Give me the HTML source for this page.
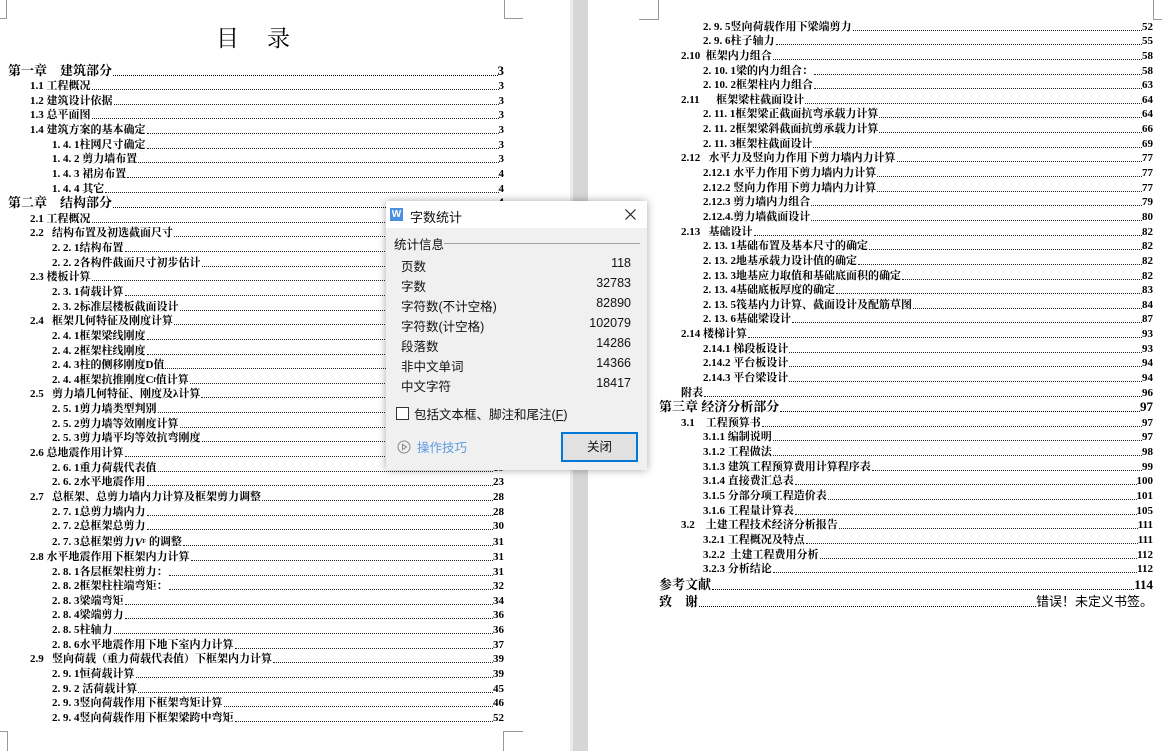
<!DOCTYPE html>
<html><head><meta charset="utf-8"><style>
*{margin:0;padding:0;box-sizing:border-box}
body{width:1162px;height:751px;overflow:hidden;background:#fff;position:relative;font-family:"Liberation Serif","Noto Serif CJK SC",serif;color:#000}
.gap{position:absolute;left:573px;top:0;width:15px;height:751px;background:#d6d6d6}
.gap2{position:absolute;left:570px;top:0;width:3px;height:751px;background:#ececec}
.cm{position:absolute;border-color:#999;border-style:solid;border-width:0}
.page{position:absolute}
.r{display:flex;align-items:flex-end;height:14.65px;font-size:11px;font-weight:bold;line-height:12px;white-space:nowrap}
.r .d{flex:1;border-bottom:1.2px dotted #222;margin:0 0 2px 1px;min-width:4px}
.c{font-size:13px;height:15.5px;line-height:14px}
.c .d{border-bottom:1.6px dotted #000}
.l2{padding-left:22px}.l3{padding-left:44px}
.t{position:absolute;left:216px;top:20px;font-size:23px;letter-spacing:28px;font-family:"Liberation Serif","Noto Serif CJK SC",serif}
.dlg{position:absolute;left:386px;top:201px;width:261px;height:269px;background:#f0f0f0;box-shadow:0 0 8px rgba(0,0,0,.35);font-family:"Liberation Sans","Noto Sans CJK SC",sans-serif;font-size:12px;color:#111}
.tb{height:27px;background:#fff;position:relative}
.row{position:absolute;left:15px;width:230px;display:flex;justify-content:space-between;font-size:12.5px}
</style></head><body>
<div class="gap2"></div><div class="gap"></div>
<div class="cm" style="left:0;top:0;width:7px;height:19px;border-right-width:1px;border-bottom-width:1px"></div>
<div class="cm" style="left:504px;top:0;width:19px;height:19px;border-left-width:1px;border-bottom-width:1px"></div>
<div class="cm" style="left:0;top:731px;width:8px;height:20px;border-right-width:1px;border-top-width:1px"></div>
<div class="cm" style="left:503px;top:731px;width:20px;height:20px;border-left-width:1px;border-top-width:1px"></div>
<div class="cm" style="left:639px;top:0;width:20px;height:20px;border-right-width:1px;border-bottom-width:1px"></div>
<div class="cm" style="left:1153px;top:0;width:9px;height:20px;border-left-width:1px;border-bottom-width:1px"></div>
<div class="t">目录</div>

<div class="page" style="left:8px;top:62px;width:496px">
<div class="r c">第一章&nbsp;&nbsp;&nbsp;&nbsp;建筑部分<span class="d"></span>3</div>
<div class="r l2">1.1 工程概况<span class="d"></span>3</div>
<div class="r l2">1.2 建筑设计依据<span class="d"></span>3</div>
<div class="r l2">1.3 总平面图<span class="d"></span>3</div>
<div class="r l2">1.4 建筑方案的基本确定<span class="d"></span>3</div>
<div class="r l3">1. 4. 1柱网尺寸确定<span class="d"></span>3</div>
<div class="r l3">1. 4. 2 剪力墙布置<span class="d"></span>3</div>
<div class="r l3">1. 4. 3 裙房布置<span class="d"></span>4</div>
<div class="r l3">1. 4. 4 其它<span class="d"></span>4</div>
<div class="r c">第二章&nbsp;&nbsp;&nbsp;&nbsp;结构部分<span class="d"></span>4</div>
<div class="r l2">2.1 工程概况<span class="d"></span>4</div>
<div class="r l2">2.2&nbsp;&nbsp;&nbsp;结构布置及初选截面尺寸<span class="d"></span>4</div>
<div class="r l3">2. 2. 1结构布置<span class="d"></span>4</div>
<div class="r l3">2. 2. 2各构件截面尺寸初步估计<span class="d"></span>5</div>
<div class="r l2">2.3 楼板计算<span class="d"></span>6</div>
<div class="r l3">2. 3. 1荷载计算<span class="d"></span>6</div>
<div class="r l3">2. 3. 2标准层楼板截面设计<span class="d"></span>6</div>
<div class="r l2">2.4&nbsp;&nbsp;&nbsp;框架几何特征及刚度计算<span class="d"></span>9</div>
<div class="r l3">2. 4. 1框架梁线刚度<span class="d"></span>9</div>
<div class="r l3">2. 4. 2框架柱线刚度<span class="d"></span>10</div>
<div class="r l3">2. 4. 3柱的侧移刚度D值<span class="d"></span>11</div>
<div class="r l3">2. 4. 4框架抗推刚度C<sub style="font-size:7px">f</sub>值计算<span class="d"></span>12</div>
<div class="r l2">2.5&nbsp;&nbsp;&nbsp;剪力墙几何特征、刚度及λ计算<span class="d"></span>13</div>
<div class="r l3">2. 5. 1剪力墙类型判别<span class="d"></span>13</div>
<div class="r l3">2. 5. 2剪力墙等效刚度计算<span class="d"></span>14</div>
<div class="r l3">2. 5. 3剪力墙平均等效抗弯刚度<span class="d"></span>17</div>
<div class="r l2">2.6 总地震作用计算<span class="d"></span>19</div>
<div class="r l3">2. 6. 1重力荷载代表值<span class="d"></span>19</div>
<div class="r l3">2. 6. 2水平地震作用<span class="d"></span>23</div>
<div class="r l2">2.7&nbsp;&nbsp;&nbsp;总框架、总剪力墙内力计算及框架剪力调整<span class="d"></span>28</div>
<div class="r l3">2. 7. 1总剪力墙内力<span class="d"></span>28</div>
<div class="r l3">2. 7. 2总框架总剪力<span class="d"></span>30</div>
<div class="r l3" style="height:16px">2. 7. 3总框架剪力<i style="font-size:12px">V</i><sub style="font-size:6px">F</sub>&nbsp;的调整<span class="d"></span>31</div>
<div class="r l2">2.8 水平地震作用下框架内力计算<span class="d"></span>31</div>
<div class="r l3">2. 8. 1各层框架柱剪力：<span class="d"></span>31</div>
<div class="r l3">2. 8. 2框架柱柱端弯矩：<span class="d"></span>32</div>
<div class="r l3">2. 8. 3梁端弯矩<span class="d"></span>34</div>
<div class="r l3">2. 8. 4梁端剪力<span class="d"></span>36</div>
<div class="r l3">2. 8. 5柱轴力<span class="d"></span>36</div>
<div class="r l3">2. 8. 6水平地震作用下地下室内力计算<span class="d"></span>37</div>
<div class="r l2">2.9&nbsp;&nbsp;&nbsp;竖向荷载（重力荷载代表值）下框架内力计算<span class="d"></span>39</div>
<div class="r l3">2. 9. 1恒荷载计算<span class="d"></span>39</div>
<div class="r l3">2. 9. 2 活荷载计算<span class="d"></span>45</div>
<div class="r l3">2. 9. 3竖向荷载作用下框架弯矩计算<span class="d"></span>46</div>
<div class="r l3">2. 9. 4竖向荷载作用下框架梁跨中弯矩<span class="d"></span>52</div>
</div>

<div class="page" style="left:659px;top:18px;width:494px">
<div class="r l3">2. 9. 5竖向荷载作用下梁端剪力<span class="d"></span>52</div>
<div class="r l3">2. 9. 6柱子轴力<span class="d"></span>55</div>
<div class="r l2">2.10&nbsp;&nbsp;框架内力组合<span class="d"></span>58</div>
<div class="r l3">2. 10. 1梁的内力组合：<span class="d"></span>58</div>
<div class="r l3">2. 10. 2框架柱内力组合<span class="d"></span>63</div>
<div class="r l2">2.11&nbsp;&nbsp;&nbsp;&nbsp;&nbsp;&nbsp;框架梁柱截面设计<span class="d"></span>64</div>
<div class="r l3">2. 11. 1框架梁正截面抗弯承载力计算<span class="d"></span>64</div>
<div class="r l3">2. 11. 2框架梁斜截面抗剪承载力计算<span class="d"></span>66</div>
<div class="r l3">2. 11. 3框架柱截面设计<span class="d"></span>69</div>
<div class="r l2">2.12&nbsp;&nbsp;&nbsp;水平力及竖向力作用下剪力墙内力计算<span class="d"></span>77</div>
<div class="r l3">2.12.1 水平力作用下剪力墙内力计算<span class="d"></span>77</div>
<div class="r l3">2.12.2 竖向力作用下剪力墙内力计算<span class="d"></span>77</div>
<div class="r l3">2.12.3 剪力墙内力组合<span class="d"></span>79</div>
<div class="r l3">2.12.4.剪力墙截面设计<span class="d"></span>80</div>
<div class="r l2">2.13&nbsp;&nbsp;&nbsp;基础设计<span class="d"></span>82</div>
<div class="r l3">2. 13. 1基础布置及基本尺寸的确定<span class="d"></span>82</div>
<div class="r l3">2. 13. 2地基承载力设计值的确定<span class="d"></span>82</div>
<div class="r l3">2. 13. 3地基应力取值和基础底面积的确定<span class="d"></span>82</div>
<div class="r l3">2. 13. 4基础底板厚度的确定<span class="d"></span>83</div>
<div class="r l3">2. 13. 5筏基内力计算、截面设计及配筋草图<span class="d"></span>84</div>
<div class="r l3">2. 13. 6基础梁设计<span class="d"></span>87</div>
<div class="r l2">2.14 楼梯计算<span class="d"></span>93</div>
<div class="r l3">2.14.1 梯段板设计<span class="d"></span>93</div>
<div class="r l3">2.14.2 平台板设计<span class="d"></span>94</div>
<div class="r l3">2.14.3 平台梁设计<span class="d"></span>94</div>
<div class="r l2">附表<span class="d"></span>96</div>
<div class="r c">第三章 经济分析部分<span class="d"></span>97</div>
<div class="r l2">3.1&nbsp;&nbsp;&nbsp;&nbsp;工程预算书<span class="d"></span>97</div>
<div class="r l3">3.1.1 编制说明<span class="d"></span>97</div>
<div class="r l3">3.1.2 工程做法<span class="d"></span>98</div>
<div class="r l3">3.1.3 建筑工程预算费用计算程序表<span class="d"></span>99</div>
<div class="r l3">3.1.4 直接费汇总表<span class="d"></span>100</div>
<div class="r l3">3.1.5 分部分项工程造价表<span class="d"></span>101</div>
<div class="r l3">3.1.6 工程量计算表<span class="d"></span>105</div>
<div class="r l2">3.2&nbsp;&nbsp;&nbsp;&nbsp;土建工程技术经济分析报告<span class="d"></span>111</div>
<div class="r l3">3.2.1 工程概况及特点<span class="d"></span>111</div>
<div class="r l3">3.2.2&nbsp;&nbsp;土建工程费用分析<span class="d"></span>112</div>
<div class="r l3">3.2.3 分析结论<span class="d"></span>112</div>
<div class="r c" style="height:17px">参考文献<span class="d"></span>114</div>
<div class="r c" style="height:17px">致&nbsp;&nbsp;&nbsp;&nbsp;谢<span class="d"></span><span style="font-weight:normal;font-family:'Liberation Sans','Noto Sans CJK SC',sans-serif">错误！未定义书签。</span></div>
</div>

<div class="dlg">
<div class="tb">
<div style="position:absolute;left:4px;top:7px;width:13px;height:13px;background:#4a8fe0;color:#fff;font-size:10px;line-height:13px;text-align:center;font-weight:bold">W</div>
<div style="position:absolute;left:24px;top:6px;font-size:13px">字数统计</div>
<svg style="position:absolute;left:239px;top:8px" width="11" height="11"><path d="M0.5 0.5L10.5 10.5M10.5 0.5L0.5 10.5" stroke="#222" stroke-width="1.2"/></svg>
</div>
<div style="position:absolute;left:8px;top:33px;font-size:12.5px">统计信息</div>
<div style="position:absolute;left:58px;top:42px;width:196px;height:1px;background:#a0a0a0"></div>
<div class="row" style="top:55px"><span>页数</span><span>118</span></div>
<div class="row" style="top:75px"><span>字数</span><span>32783</span></div>
<div class="row" style="top:95px"><span>字符数(不计空格)</span><span>82890</span></div>
<div class="row" style="top:115px"><span>字符数(计空格)</span><span>102079</span></div>
<div class="row" style="top:135px"><span>段落数</span><span>14286</span></div>
<div class="row" style="top:155px"><span>非中文单词</span><span>14366</span></div>
<div class="row" style="top:175px"><span>中文字符</span><span>18417</span></div>
<div style="position:absolute;left:10px;top:206px;width:13px;height:13px;border:1px solid #333;background:#fff"></div>
<div style="position:absolute;left:28px;top:203px;font-size:12.5px">包括文本框、脚注和尾注(<u>F</u>)</div>
<svg style="position:absolute;left:11px;top:239px" width="14" height="14"><circle cx="7" cy="7" r="6" fill="none" stroke="#888" stroke-width="1"/><path d="M5.5 4.3L9.5 7L5.5 9.7Z" fill="none" stroke="#888" stroke-width="1"/></svg>
<div style="position:absolute;left:31px;top:236px;font-size:12.5px;color:#5b9be0">操作技巧</div>
<div style="position:absolute;left:175px;top:231px;width:77px;height:30px;border:2px solid #0078d7;background:#e1e1e1;text-align:center;line-height:26px;font-size:12.5px">关闭</div>
</div>
</body></html>
